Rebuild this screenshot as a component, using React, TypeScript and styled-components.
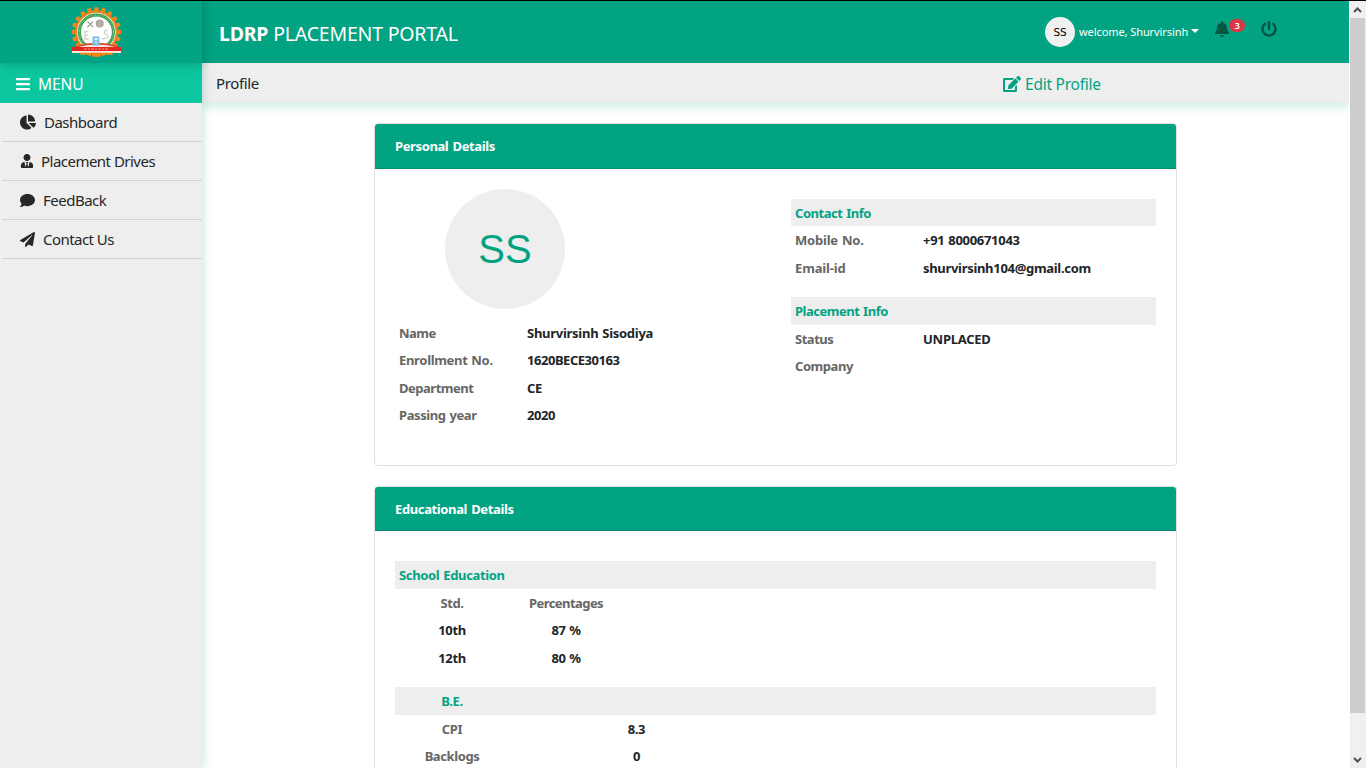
import React from "react";
import styled, { createGlobalStyle } from "styled-components";
import { FaBars, FaBell, FaChartPie, FaComment, FaEdit, FaPaperPlane, FaPowerOff, FaUserTie } from "react-icons/fa";

const green = "#02a382";
const ink = "#212529";

const GlobalStyle = createGlobalStyle`
  * { box-sizing: border-box; }
  body { margin: 0; overflow: hidden; background: #fff; color: ${ink}; font-family: "Segoe UI", "Noto Sans", "Open Sans", sans-serif; }
`;

const Page = styled.div`
  display: flex;
  width: 1366px;
  height: 768px;
  border-top: 1px solid #000;
  overflow: hidden;
`;

const Sidebar = styled.aside`
  position: relative;
  z-index: 2;
  flex: 0 0 202px;
  background: #eee;
  box-shadow: 0 0 10px rgba(2, 140, 112, 0.28);
`;

const LogoBox = styled.div`
  position: relative;
  height: 62px;
  padding: 5px 0 0 71px;
  background: ${green};
  box-shadow: 0 1px 9px rgba(0, 70, 55, 0.35);
`;

const MenuTitle = styled.div`
  display: flex;
  align-items: center;
  gap: 7px;
  height: 40px;
  padding: 2px 0 0 15px;
  background: #0bc69f;
  color: #fff;
  font-size: 15.5px;
  letter-spacing: -0.1px;
`;

const NavItem = styled.a<{ $gap: number; $track: number }>`
  display: flex;
  align-items: center;
  gap: ${(p) => p.$gap}px;
  height: 39px;
  margin-left: 2px;
  padding-left: 18px;
  border-bottom: 1px solid #d2d2d2;
  color: #272727;
  font-size: 15px;
  letter-spacing: ${(p) => p.$track}px;
`;

const Main = styled.div`
  flex: 1;
  min-width: 0;
`;

const Header = styled.header`
  display: flex;
  align-items: flex-start;
  height: 62px;
  padding-left: 17px;
  background: ${green};
  color: #fff;
`;

const Brand = styled.div`
  width: 826px;
  padding-top: 20px;
  font-size: 19.5px;
  line-height: 26px;
  letter-spacing: -0.2px;
`;

const UserChip = styled.div`
  display: flex;
  align-items: center;
  height: 30px;
  margin-top: 16px;
  font-size: 11px;
  letter-spacing: -0.08px;
`;

const UserName = styled.span`
  margin-top: -1px;
`;

const SmallAvatar = styled.span`
  width: 30px;
  height: 30px;
  margin-right: 4px;
  border-radius: 50%;
  background: #f0f0f0;
  color: #000;
  font: 10.5px/31px "DejaVu Sans", sans-serif;
  text-align: center;
`;

const Caret = styled.span`
  margin: -3px 0 0 3px;
  border: 4px solid transparent;
  border-top-color: #fff;
  border-bottom: 0;
`;

const Alerts = styled.div`
  display: flex;
  width: 47px;
  margin: 18px 0 0 15px;
  color: #045645;
  svg { margin-top: 2px; }
`;

const Badge = styled.span`
  width: 16px;
  height: 13px;
  margin-left: -1px;
  border-radius: 7px;
  background: #dc3545;
  color: #fff;
  font-size: 9.5px;
  font-weight: 600;
  line-height: 13px;
  text-align: center;
`;

const Power = styled.div`
  margin-top: 20px;
  color: #045645;
  line-height: 0;
`;

const CrumbBar = styled.div`
  display: flex;
  align-items: center;
  height: 40px;
  padding-left: 14px;
  background: #eee;
  box-shadow: 0 4px 9px rgba(2, 163, 130, 0.2);
  font-size: 15px;
`;

const Crumb = styled.div`
  width: 787px;
  letter-spacing: -0.35px;
`;

const EditLink = styled.a`
  display: flex;
  align-items: center;
  gap: 4px;
  padding-top: 2px;
  color: ${green};
  font-size: 15.5px;
  letter-spacing: -0.24px;
`;

const Content = styled.main`
  padding: 20px 0 0 172px;
`;

const Card = styled.section<{ $height: number }>`
  width: 803px;
  height: ${(p) => p.$height}px;
  margin-bottom: 20px;
  border: 1px solid #dfdfdf;
  border-radius: 4px;
  overflow: hidden;
  font-size: 13px;
  font-weight: 700;
  line-height: 19.5px;
`;

const CardHead = styled.h2<{ $height: number }>`
  height: ${(p) => p.$height}px;
  margin: 0;
  padding: 12.6px 20px 0;
  border-bottom: 1px solid #028c70;
  background: ${green};
  color: #fff;
  font-size: inherit;
  letter-spacing: -0.38px;
  word-spacing: 1.2px;
`;

const CardBody = styled.div`
  display: flex;
  justify-content: space-between;
  padding: 20px;
`;

const Column = styled.div<{ $wide?: boolean }>`
  width: ${(p) => (p.$wide ? "100%" : "365px")};
`;

const Avatar = styled.div`
  width: 120px;
  height: 120px;
  margin: 0 0 10.5px 50px;
  border-radius: 50%;
  background: #eee;
  color: ${green};
  font: 40px/120px "Liberation Sans", Arial, sans-serif;
  text-align: center;
`;

const Row = styled.div<{ $head?: boolean; $cols: string; $center?: boolean }>`
  display: grid;
  grid-template-columns: ${(p) => p.$cols};
  height: 27.5px;
  background: ${(p) => (p.$head ? "#eee" : "transparent")};
  color: ${(p) => (p.$head ? green : ink)};
  text-align: ${(p) => (p.$center ? "center" : "left")};
`;

const Cell = styled.span<{ $muted?: boolean; $track?: number }>`
  padding: 4.5px 4px 0;
  white-space: nowrap;
  color: ${(p) => (p.$muted ? "#666" : "inherit")};
  letter-spacing: ${(p) => p.$track ?? -0.4}px;
  word-spacing: 0.8px;
`;

const Table = styled.div`
  margin: 10px 0 16px;
  ${Cell} { padding-top: 5px; }
`;

const ScrollTrack = styled.div`
  display: flex;
  flex-direction: column;
  flex: 0 0 17px;
  border-left: 1px solid #fff;
  background: #f0f0f0;
`;

const ScrollArrow = styled.div`
  height: 17px;
  line-height: 0;
`;

const ScrollThumb = styled.div`
  height: 695px;
  margin-right: 1px;
  background: #cdcdcd;
`;

const Spacer = styled.div`
  flex: 1;
`;

const Arrow = ({ down }: { down?: boolean }) => (
  <svg width="15" height="17" viewBox="0 0 15 17" fill="none" stroke="#505050" strokeWidth="2">
    <path d={down ? "M4 7l3.5 3.5L11 7" : "M4 11l3.5-3.5L11 11"} />
  </svg>
);

const teeth = Array.from({ length: 20 }, (_, i) => i * 18);

const Logo = () => (
  <svg width="51" height="52" viewBox="0 0 51 52">
    {teeth.map((a) => (
      <path key={a} d="M23 5.5l.5-4.3h3.8l.5 4.3z" fill="#ee861c" transform={`rotate(${a} 25.4 26)`} />
    ))}
    <circle cx="25.4" cy="26" r="21.4" fill="#ee821a" />
    <circle cx="25.4" cy="26" r="19.3" fill="#f7f7ef" />
    <circle cx="25.4" cy="26" r="17" fill="none" stroke="#2f9f4a" strokeWidth="3" />
    <circle cx="25.4" cy="26" r="17" fill="none" stroke="#b4d8b8" strokeWidth="1.2" strokeDasharray=".7 1.3 .5 .9" />
    <circle cx="25.4" cy="26" r="14.8" fill="#fff" />
    <g fill="none" stroke="#aaa69d" strokeWidth="1.4">
      <path d="M16.5 15.5l5.5 5.5M22 15.5l-5.7 5.7" />
      <circle cx="28.7" cy="17.5" r="3.3" fill="#bab5aa" />
      <path d="M27 15v6M30.5 15.5v4" strokeWidth=".8" />
      <path d="M17.5 25.5h-3.5v7.5h4M14 29h3M37 24.5c-4-1-4.5 3-1.5 4s1.5 5-5 4" stroke="#d5d5cf" />
    </g>
    <path d="M5 41Q25 35 46.5 41L50 47H1z" fill="#f3e8df" />
    <path d="M8 46.5l2 2.5h5l2-2h17l2 2h5l2-2.5z" fill="#ee861c" />
    <path d="M20 46.5h11l-1.5 4.3h-8z" fill="#ee861c" />
    <path d="M5 40.8Q25.5 34.5 47 40.8" fill="none" stroke="#d7492c" strokeWidth="1.6" />
    <path d="M21.5 30.5h6.8v9h-6.8z" fill="#73bce0" />
    <path d="M23.3 32h3.5v2.2h-3.5zM24.2 35.4h1.8v2h-1.8z" fill="#d9f1f9" />
    <path d="M1 41h49v4H1z" fill="#e52620" />
    <path d="M1 45h49v1.5H1z" fill="#f6eee6" />
    <path d="M13 43h24" stroke="#ff9f87" strokeWidth="1" strokeDasharray="3 1 2 1" />
  </svg>
);

const pair = "128px 1fr";
const school = "114px 114px 1fr";
const degree = "114px 255px 1fr";

export default function App() {
  return (
    <>
      <GlobalStyle />
      <Page>
        <Sidebar>
          <LogoBox><Logo /></LogoBox>
          <MenuTitle><FaBars size={16} /><span>MENU</span></MenuTitle>
          <NavItem $gap={8} $track={-0.5}><FaChartPie size={16} />Dashboard</NavItem>
          <NavItem $gap={7} $track={-0.52}><FaUserTie size={14} />Placement Drives</NavItem>
          <NavItem $gap={8} $track={-0.5}><FaComment size={15} />FeedBack</NavItem>
          <NavItem $gap={8} $track={-0.55}><FaPaperPlane size={15} />Contact Us</NavItem>
        </Sidebar>
        <Main>
          <Header>
            <Brand><b>LDRP</b> PLACEMENT PORTAL</Brand>
            <UserChip><SmallAvatar>SS</SmallAvatar><UserName>welcome, Shurvirsinh</UserName><Caret /></UserChip>
            <Alerts><FaBell size={16} /><Badge>3</Badge></Alerts>
            <Power><FaPowerOff size={16} /></Power>
          </Header>
          <CrumbBar>
            <Crumb>Profile</Crumb>
            <EditLink><FaEdit size={18} /><span>Edit Profile</span></EditLink>
          </CrumbBar>
          <Content>
            <Card $height={343}>
              <CardHead $height={44.5}>Personal Details</CardHead>
              <CardBody>
                <Column>
                  <Avatar>SS</Avatar>
                  <Row $cols={pair}><Cell $muted $track={-0.5}>Name</Cell><Cell $track={-0.27}>Shurvirsinh Sisodiya</Cell></Row>
                  <Row $cols={pair}><Cell $muted $track={-0.32}>Enrollment No.</Cell><Cell $track={-0.46}>1620BECE30163</Cell></Row>
                  <Row $cols={pair}><Cell $muted $track={-0.48}>Department</Cell><Cell>CE</Cell></Row>
                  <Row $cols={pair}><Cell $muted>Passing year</Cell><Cell>2020</Cell></Row>
                </Column>
                <Column>
                  <Table>
                    <Row $cols={pair} $head><Cell $track={-0.46}>Contact Info</Cell></Row>
                    <Row $cols={pair}><Cell $muted $track={-0.2}>Mobile No.</Cell><Cell $track={-0.3}>+91 8000671043</Cell></Row>
                    <Row $cols={pair}><Cell $muted $track={-0.15}>Email-id</Cell><Cell $track={-0.31}>shurvirsinh104@gmail.com</Cell></Row>
                  </Table>
                  <Table>
                    <Row $cols={pair} $head><Cell $track={-0.48}>Placement Info</Cell></Row>
                    <Row $cols={pair}><Cell $muted $track={-0.48}>Status</Cell><Cell $track={-0.26}>UNPLACED</Cell></Row>
                    <Row $cols={pair}><Cell $muted $track={-0.45}>Company</Cell></Row>
                  </Table>
                </Column>
              </CardBody>
            </Card>
            <Card $height={420}>
              <CardHead $height={44}>Educational Details</CardHead>
              <CardBody>
                <Column $wide>
                  <Table>
                    <Row $cols={school} $head><Cell $track={-0.34}>School Education</Cell></Row>
                    <Row $cols={school} $center><Cell $muted>Std.</Cell><Cell $muted $track={-0.55}>Percentages</Cell></Row>
                    <Row $cols={school} $center><Cell>10th</Cell><Cell>87 %</Cell></Row>
                    <Row $cols={school} $center><Cell>12th</Cell><Cell>80 %</Cell></Row>
                  </Table>
                  <Table>
                    <Row $cols={degree} $head $center><Cell>B.E.</Cell></Row>
                    <Row $cols={degree} $center><Cell $muted>CPI</Cell><Cell>8.3</Cell></Row>
                    <Row $cols={degree} $center><Cell $muted>Backlogs</Cell><Cell>0</Cell></Row>
                  </Table>
                </Column>
              </CardBody>
            </Card>
          </Content>
        </Main>
        <ScrollTrack>
          <ScrollArrow><Arrow /></ScrollArrow>
          <ScrollThumb />
          <Spacer />
          <ScrollArrow><Arrow down /></ScrollArrow>
        </ScrollTrack>
      </Page>
    </>
  );
}
